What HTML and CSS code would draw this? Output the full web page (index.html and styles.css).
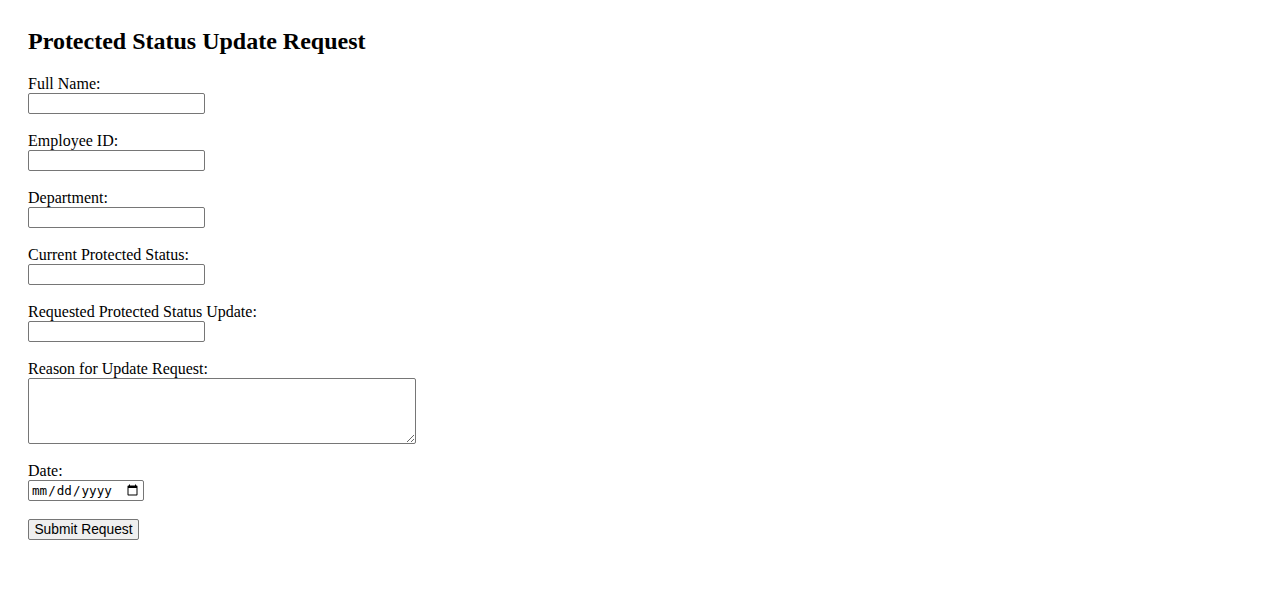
FILE: index.html
```html
<!DOCTYPE html>
<html lang="en">
<head>
<meta charset="utf-8">
<title>Protected Status Update Request</title>
<link rel="stylesheet" href="styles.css">
</head>
<body>
<div class="page">
  <h2 class="title">Protected Status Update Request</h2>
  <form class="form">
    <div class="field">
      <label class="label" for="name">Full Name:</label>
      <input class="text-input" type="text" id="name">
    </div>
    <div class="field">
      <label class="label" for="empid">Employee ID:</label>
      <input class="text-input" type="text" id="empid">
    </div>
    <div class="field">
      <label class="label" for="dept">Department:</label>
      <input class="text-input" type="text" id="dept">
    </div>
    <div class="field">
      <label class="label" for="cur">Current Protected Status:</label>
      <input class="text-input" type="text" id="cur">
    </div>
    <div class="field">
      <label class="label" for="req">Requested Protected Status Update:</label>
      <input class="text-input" type="text" id="req">
    </div>
    <div class="field">
      <label class="label" for="reason">Reason for Update Request:</label>
      <textarea class="text-area" id="reason"></textarea>
    </div>
    <div class="field">
      <label class="label" for="date">Date:</label>
      <input class="date-input" type="date" id="date">
    </div>
    <div class="field">
      <button class="submit" type="button">Submit Request</button>
    </div>
  </form>
</div>
</body>
</html>
```

FILE: styles.css
```css
html, body {
  margin: 0;
  padding: 0;
  background: #ffffff;
}

body {
  font-family: "Liberation Serif", "Times New Roman", serif;
  font-size: 16px;
  color: #000000;
}

.page {
  padding: 28px;
}

.title {
  margin: 0 0 20px 0;
  font-size: 24px;
  font-weight: bold;
  line-height: 27px;
}

.form {
  display: flex;
  flex-direction: column;
}

.field {
  display: flex;
  flex-direction: column;
  align-items: flex-start;
  margin-bottom: 18px;
}

.label {
  line-height: 18px;
  height: 18px;
}

.text-input {
  box-sizing: border-box;
  width: 177px;
  height: 21px;
  margin: 0;
  padding: 1px 2px;
  border: 1px solid #767676;
  border-radius: 2px;
  font-family: "Liberation Sans", Arial, sans-serif;
  font-size: 13.33px;
  background: #ffffff;
}

.text-area {
  box-sizing: border-box;
  width: 388px;
  height: 66px;
  margin: 0;
  padding: 2px;
  border: 1px solid #767676;
  border-radius: 2px;
  font-family: "Liberation Mono", monospace;
  font-size: 13.33px;
  resize: both;
}

.date-input {
  box-sizing: border-box;
  width: 116px;
  height: 21px;
  margin: 0;
  padding: 1px 2px;
  border: 1px solid #767676;
  border-radius: 2px;
  font-family: "DejaVu Sans Mono", "Liberation Mono", monospace;
  font-size: 12.6px;
  background: #ffffff;
}

.submit {
  box-sizing: border-box;
  width: 111px;
  height: 21px;
  margin: 0;
  padding: 1px 4px;
  border: 1px solid #767676;
  border-radius: 2px;
  background: #efefef;
  font-family: "Liberation Sans", Arial, sans-serif;
  font-size: 13.8px;
  color: #000000;
}
```
